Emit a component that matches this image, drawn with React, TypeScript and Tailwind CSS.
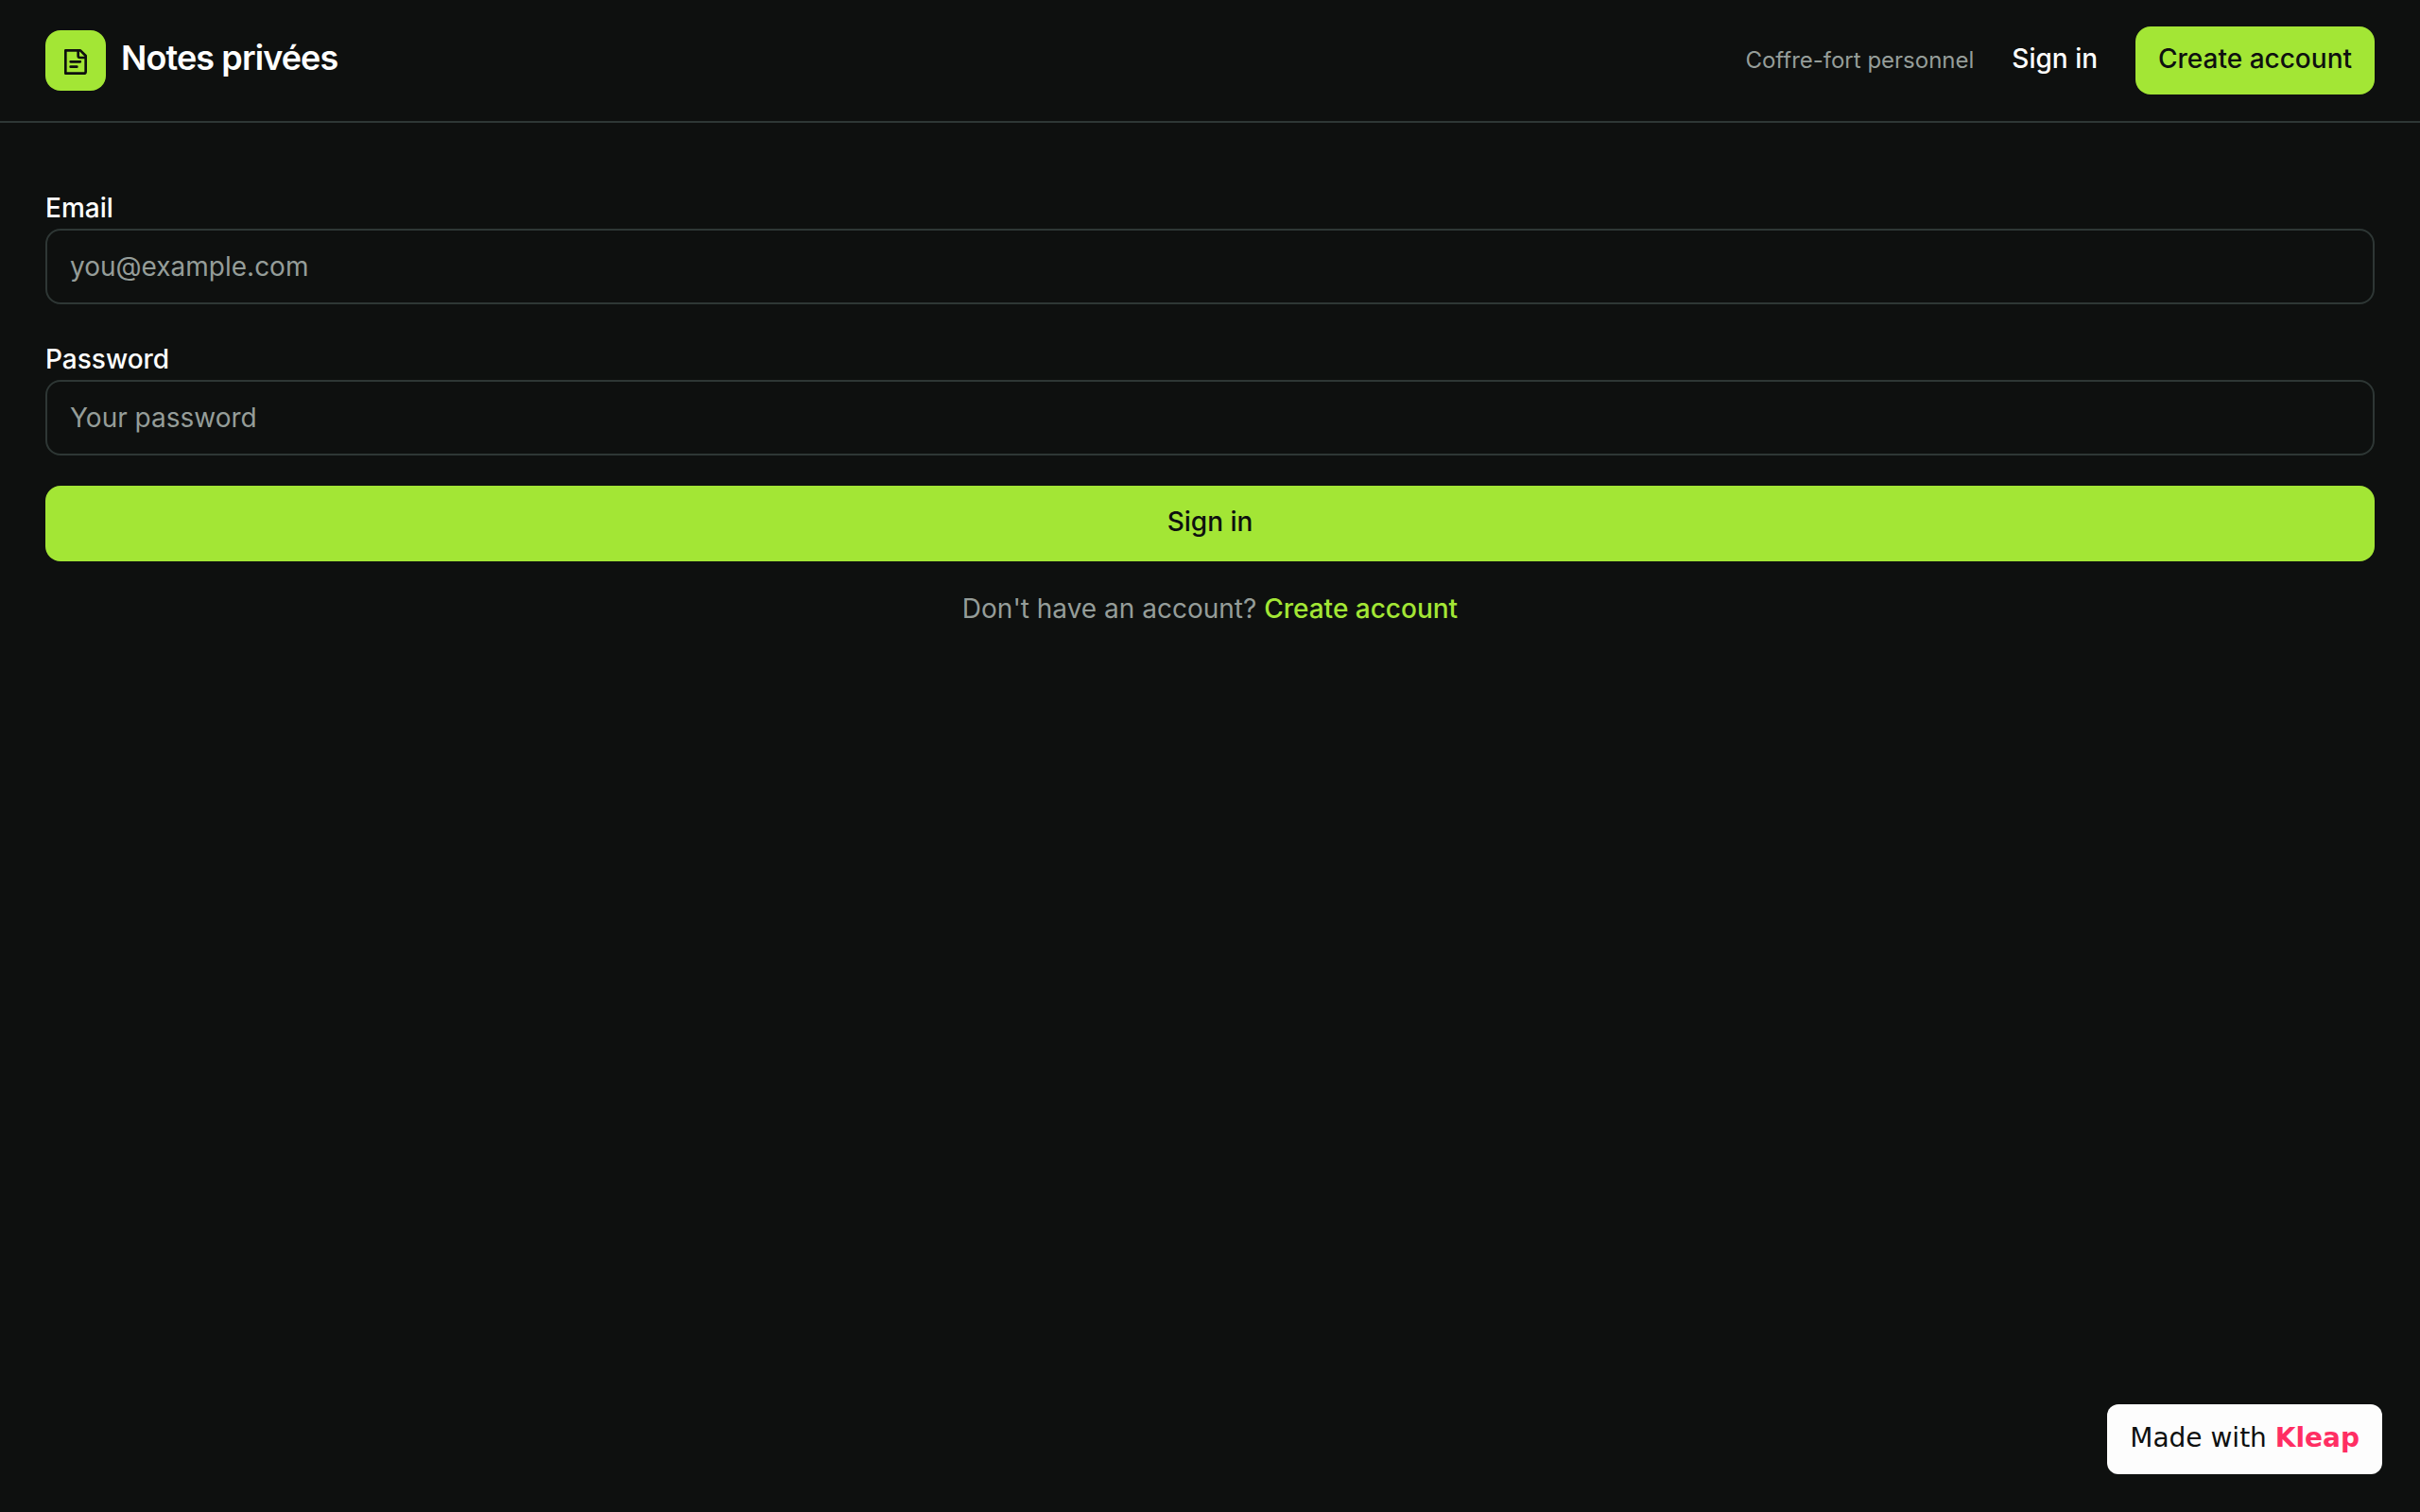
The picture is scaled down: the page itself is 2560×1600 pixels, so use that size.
import React from 'react'

function LogoIcon() {
    return (
        <svg
            aria-hidden
            viewBox="0 0 32 32"
            className="size-8"
            fill="none"
            stroke="currentColor"
            strokeWidth="2.67"
            strokeLinecap="round"
            strokeLinejoin="round"
        >
            <path d="M5.33 5.33H21l5.67 5.67v16.67a2 2 0 0 1-2 2H5.33z" />
            <path d="M18.67 5.5v5.5a2 2 0 0 0 2 2h5.83" />
            <path d="M10.67 17.33h10.2M10.67 22.67h6.66" />
        </svg>
    )
}

function Header() {
    return (
        <header className="flex items-center justify-between border-b-2 border-[#2e3735] px-12 py-7">
            <a href="#" className="flex items-center gap-4">
                <span className="flex size-16 items-center justify-center rounded-2xl bg-[#a3e635] text-[#0e100f]">
                    <LogoIcon />
                </span>
                <span className="pb-1.5 text-4xl font-semibold tracking-tight">Notes privées</span>
            </a>
            <nav className="flex items-center gap-10">
                <span className="text-2xl text-[#959d99]">Coffre-fort personnel</span>
                <a href="#signin" className="pb-1 font-medium">
                    Sign in
                </a>
                <a
                    href="#signup"
                    className="flex h-18 items-center rounded-2xl bg-[#a3e635] px-6 pb-1 font-medium text-[#0e100f]"
                >
                    Create account
                </a>
            </nav>
        </header>
    )
}

type FieldProps = {
    id: string
    label: string
    type: string
    placeholder: string
}

function Field({ id, label, type, placeholder }: FieldProps) {
    return (
        <div className="flex flex-col gap-1">
            <label htmlFor={id} className="font-medium">
                {label}
            </label>
            <input
                id={id}
                type={type}
                placeholder={placeholder}
                className="h-20 w-full rounded-2xl border-2 border-[#2e3735] bg-transparent px-6 placeholder:text-[#959d99]"
            />
        </div>
    )
}

export default function App() {
    return (
        <div className="min-h-screen bg-[#0e100f] font-['Inter',sans-serif] text-[28px] leading-9 text-white">
            <Header />
            <main className="px-12 pt-18">
                <form className="flex flex-col gap-8">
                    <div className="flex flex-col gap-10">
                        <Field id="email" label="Email" type="email" placeholder="you@example.com" />
                        <Field id="password" label="Password" type="password" placeholder="Your password" />
                    </div>
                    <button
                        type="submit"
                        className="flex h-20 items-center justify-center rounded-2xl bg-[#a3e635] pb-1 font-medium text-[#0e100f]"
                    >
                        Sign in
                    </button>
                    <p className="text-center text-[#959d99]">
                        Don't have an account?{' '}
                        <a href="#signup" className="font-medium text-[#a3e635]">
                            Create account
                        </a>
                    </p>
                </form>
            </main>
            {/* Badge */}
            <a
                href="#kleap"
                className="fixed right-10 bottom-10 flex items-center rounded-xl bg-[#fdfdfd] px-6 pt-4.5 pb-5 font-['DejaVu_Sans',sans-serif] text-[#0e100f]"
            >
                <span>
                    Made with <strong className="font-bold text-[#ff2e63]">Kleap</strong>
                </span>
            </a>
        </div>
    )
}
